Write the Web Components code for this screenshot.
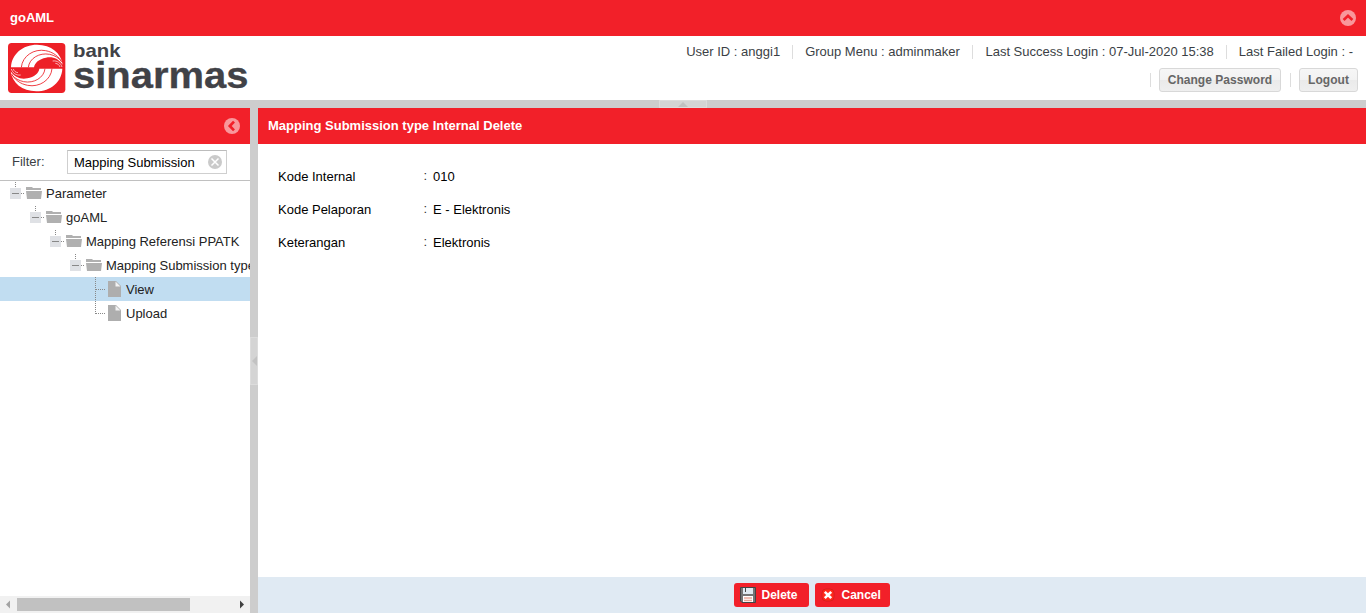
<!DOCTYPE html>
<html lang="id"><head><meta charset="utf-8"><title>goAML</title>
<style>html,body{margin:0;height:100%;overflow:hidden;background:#fff;font:13px "Liberation Sans",Arial,sans-serif;color:#000}</style></head>
<body><aml-app></aml-app>
<script>
const define=(name,html,setup)=>customElements.define(name,class extends HTMLElement{
  constructor(){super();this.attachShadow({mode:'open'});}
  connectedCallback(){if(this.shadowRoot.childNodes.length)return;const t=document.createElement('template');t.innerHTML=html;this.shadowRoot.append(t.content.cloneNode(true));if(setup)setup(this,this.shadowRoot);}
});
define('panel-header',`<style>:host{display:flex;box-sizing:border-box;height:36px;background:#f22029;color:#fff;font-weight:bold;align-items:center;justify-content:space-between;padding:0 10px;line-height:16px;flex:none}svg{display:none;width:16px;height:16px}:host([tool]) svg{display:block}:host([tool=left]) svg{transform:rotate(-90deg)}</style><span><slot></slot></span><svg viewBox="0 0 16 16"><circle cx="8" cy="8" r="8" fill="#f9979b"/><path d="M3.6 10 8 5.8l4.4 4.2" fill="none" stroke="#f22029" stroke-width="2.7"/></svg>`);
define('bank-logo',`<style>:host{display:flex;color:#414247;font-weight:bold}svg.mark{width:62px;height:54px;flex:none}.words{display:block;width:184px;height:54px;flex:none;margin-left:5px;font-family:"Liberation Sans",Arial,sans-serif}</style>
<svg class="mark" viewBox="0 0 186 162"><rect x="6" y="6" width="172" height="150" rx="11" fill="#ed2027"/>
<defs><g id="w"><path d="M15 79C17 39 50 11 93 11c43 0 72 25 77 60-12-18-30-25-50-21-21 4-34 15-36 29z" fill="#fff"/><g fill="none" stroke="#ed2027" stroke-width="2.6"><path d="M46 79C49 45 84 22 119 29c22 4 39 17 48 34M67 79C70 52 100 34 131 40c14 3 27 10 35 20"/></g><path d="M140 60c14-2 24 6 28 18M148 67c8 1 12 5 14 11" fill="none" stroke="#fff" stroke-width="2"/></g></defs>
<use href="#w"/><use href="#w" transform="rotate(180 92 81)"/></svg>
<svg class="words" viewBox="0 0 184 54"><g fill="#414247"><text x="0" y="15.5" font-size="18.5" textLength="47.5" lengthAdjust="spacingAndGlyphs">bank</text><text x="0" y="47" font-size="37" stroke="#414247" stroke-width=".3" textLength="175.5" lengthAdjust="spacingAndGlyphs">sinarmas</text></g></svg>`);
define('tool-button',`<style>:host{display:flex;box-sizing:border-box;height:24px;border:1px solid #d8d8d8;border-radius:3px;background:linear-gradient(#f6f6f6,#f2f2f2 50%,#eaeaea 50%,#efefef);color:#666;font-weight:bold;font-size:12px;letter-spacing:.03px;align-items:center;justify-content:center;line-height:16px;padding-bottom:1px;white-space:nowrap}</style><slot></slot>`);
define('info-bar',`<style>:host{display:flex;flex-direction:column;color:#3b3f45;white-space:nowrap}div{display:flex;justify-content:flex-end;height:24px;align-items:center}i{width:1px;height:14px;background:#ddd}.a{margin-top:4px;padding-right:5px}.b{margin-top:4px}.a span{line-height:16px}.a i{margin:0 12px}.a i.g{margin-right:12.7px}.b i{margin:0 8px}</style><div class="a"><span>User ID : anggi1</span><i></i><span>Group Menu : adminmaker</span><i class="g"></i><span>Last Success Login : 07-Jul-2020 15:38</span><i></i><span>Last Failed Login : -</span></div><div class="b"><i></i><tool-button style="width:122px">Change Password</tool-button><i style="margin-left:9px"></i><tool-button style="width:59px">Logout</tool-button></div>`);
define('split-bar',`<style>:host{display:flex;background:#cdcdcd;align-items:center;justify-content:center;flex:none}b{box-sizing:border-box;width:48px;height:8px;background:#d4d4d4;border:1px solid #dcdcdc;display:flex;justify-content:center;align-items:center}svg{width:10px;height:5px}:host([vertical]) b{width:8px;height:48px}:host([vertical]) svg{width:5px;height:10px;flex:none}</style><b></b>`,(e,s)=>{s.querySelector('b').innerHTML=e.hasAttribute('vertical')?'<svg viewBox="0 0 5 10"><path d="M5 0 0 5l5 5z" fill="#c2c2c2"/></svg>':'<svg viewBox="0 0 10 5"><path d="M0 5 5 0l5 5z" fill="#c0c0c0"/></svg>'});
define('filter-box',`<style>:host{display:flex;height:36px;flex:none;box-sizing:content-box;border-bottom:1px solid #c0c0c0;color:#3b3f45;padding-left:12px}label{width:55px;line-height:36px}.f{display:flex;box-sizing:border-box;width:160px;height:24px;border:1px solid #cfcfcf;border-top-color:#bcbcbc;margin-top:6px;padding:0 4px 0 6px;align-items:center;justify-content:space-between;color:#000;line-height:16px}.f span{padding-top:1px}svg{width:14px;height:14px}</style><label>Filter:</label><div class="f"><span>Mapping Submission</span><svg viewBox="0 0 14 14"><circle cx="7" cy="7" r="7" fill="#cacaca"/><path d="m3.5 3.5 7 7m0-7-7 7" stroke="#fff" stroke-width="1.5"/></svg></div>`);
define('tree-node',`<style>:host{display:flex;height:24px;line-height:25px;white-space:nowrap;overflow:hidden;color:#222}:host([selected]){background:#c1ddf1}svg{flex:none;height:24px}span{height:24px}</style><svg></svg><span><slot></slot></span>`,(e,s)=>{
 const n=+e.getAttribute('depth'),leaf=e.hasAttribute('leaf'),last=e.hasAttribute('last'),g=s.querySelector('svg'),w=46+20*n;
 g.setAttribute('width',w);g.setAttribute('viewBox','0 0 '+w+' 24');
 const x=20*n+5;
 g.innerHTML=leaf?`<path d="M${x+10.5} 0V${last?13:24}M${x+11} 12.5H${x+20}" fill="none" stroke="#888" stroke-dasharray="1 1"/><path d="M${x+23} 4h8l5 5v11h-13z" fill="#aeaeae"/><path d="M${x+30.5} 4.5v5h5z" fill="#fff" fill-opacity=".85"/>`
 :`<path d="M${x+10.5} 1V7M${x+16} 12.5h3" fill="none" stroke="#888" stroke-dasharray="1 1"/><path d="M${x+5} 7h11v11h-11z" fill="#dfe1e5"/><path d="M${x+7} 12.5h7" stroke="#888"/><path d="M${x+21} 6h6l1 1h8v2h-15z" fill="#b0b0b0"/><path d="M${x+21} 10h16l-1 8h-14z" fill="#b0b0b0"/>`;
});
define('scroll-strip',`<style>:host{display:flex;height:17px;background:#f1f1f1;flex:none;align-items:center}i{width:173px;height:13px;background:#c1c1c1}svg{width:17px;height:17px}svg:last-child{margin-left:auto}</style><svg viewBox="0 0 17 17"><path d="m6 8.5 4-4v8z" fill="#a3a3a3"/></svg><i></i><svg viewBox="0 0 17 17"><path d="m11 8.5-4-4v8z" fill="#404040"/></svg>`);
define('nav-panel',`<style>:host{display:flex;flex-direction:column;width:250px;flex:none;overflow:hidden}main{flex:1}</style><panel-header tool="left"></panel-header><filter-box></filter-box><main><tree-node depth="0">Parameter</tree-node><tree-node depth="1">goAML</tree-node><tree-node depth="2">Mapping Referensi PPATK</tree-node><tree-node depth="3">Mapping Submission type</tree-node><tree-node depth="4" leaf selected>View</tree-node><tree-node depth="4" leaf last>Upload</tree-node></main><scroll-strip></scroll-strip>`);
define('detail-row',`<style>:host{display:flex;height:33px;line-height:17px}.l{width:145.5px}.c{width:9.5px;line-height:15px;color:#333}</style><span class="l"><slot name="label"></slot></span><span class="c">:</span><span><slot></slot></span>`);
define('action-button',`<style>:host{display:flex;box-sizing:border-box;width:75px;height:24px;background:#f22029;border-radius:3px;color:#fff;font-weight:bold;font-size:12px;line-height:24px;padding-left:6px}svg{width:16px;height:16px;margin:4px 5.5px 0 0;flex:none}:host([icon=cross]) svg{margin-left:-1px}span{white-space:nowrap}</style><svg viewBox="0 0 16 16"></svg><span><slot></slot></span>`,(e,s)=>{s.querySelector('svg').innerHTML=e.getAttribute('icon')==='disk'?'<path d="M.5.5h15v15H2l-1.5-1.5z" fill="#747474" stroke="#444"/><path d="M3 1h10v6H3z" fill="#dfe9f0"/><path d="M5.5 1v4" stroke="#444"/><path d="M3 9h10v6H3z" fill="#fff"/><path d="M4 11h8m-8 2.5h8" stroke="#e9a698" stroke-width="1.4"/>':'<rect x="2" y="2" width="12" height="12" rx="4" fill="#ff2a1c" stroke="#c51a1a" stroke-opacity=".6"/><path d="m4.8 4.8 6.4 6.4m0-6.4-6.4 6.4" stroke="#fff" stroke-width="2.6"/>'});
define('detail-panel',`<style>:host{display:flex;flex-direction:column;flex:1}main{flex:1;padding:24px 20px}footer{height:36px;box-sizing:border-box;background:#e0eaf3;display:flex;justify-content:center;gap:6px;padding:6px 0 0}</style><panel-header>Mapping Submission type Internal Delete</panel-header><main><detail-row><span slot="label">Kode Internal</span>010</detail-row><detail-row><span slot="label">Kode Pelaporan</span>E - Elektronis</detail-row><detail-row><span slot="label">Keterangan</span>Elektronis</detail-row></main><footer><action-button icon="disk">Delete</action-button><action-button icon="cross">Cancel</action-button></footer>`);
define('aml-app',`<style>:host{display:flex;flex-direction:column;width:1366px;height:613px}header{display:flex;height:64px;box-sizing:border-box;padding:0 8px 0 6px;justify-content:space-between}bank-logo{margin-top:5px}section{display:flex;flex:1;min-height:0}.v{width:8px}</style><panel-header tool="up">goAML</panel-header><header><bank-logo></bank-logo><info-bar></info-bar></header><split-bar style="height:8px"></split-bar><section><nav-panel></nav-panel><split-bar vertical class="v"></split-bar><detail-panel></detail-panel></section>`);
</script></body></html>
